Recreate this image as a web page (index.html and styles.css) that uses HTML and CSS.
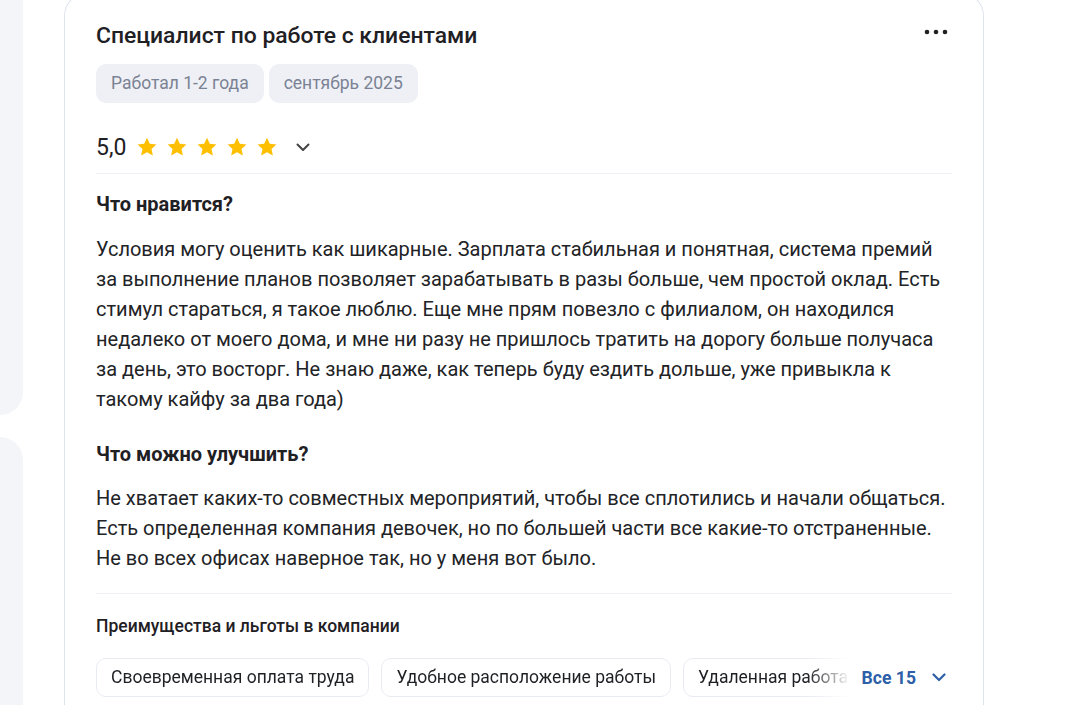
FILE: index.html
```html
<!DOCTYPE html>
<html lang="ru">
<head>
    <meta charset="UTF-8">
    <meta name="viewport" content="width=device-width, initial-scale=1.0">
    <title>Отзыв сотрудника</title>
    <link rel="stylesheet" href="styles.css">
</head>
<body>

    <div class="page">
        <!-- соседние карточки слева, видны только краем -->
        <div class="side">
            <div class="side-card side-card-top"></div>
            <div class="side-card side-card-bottom"></div>
        </div>

        <div class="review">
            <div class="review-head">
                <h2 class="review-title">Специалист по работе с клиентами</h2>
                <button class="menu-btn" type="button" aria-label="Ещё">
                    <svg width="24" height="8" viewBox="0 0 24 8">
                        <circle cx="3" cy="4" r="2.3" fill="#1f2024"/>
                        <circle cx="12" cy="4" r="2.3" fill="#1f2024"/>
                        <circle cx="21" cy="4" r="2.3" fill="#1f2024"/>
                    </svg>
                </button>
            </div>

            <div class="tags">
                <span class="tag">Работал 1-2 года</span>
                <span class="tag">сентябрь 2025</span>
            </div>

            <div class="rating">
                <span class="rating-value">5,0</span>
                <div class="stars" id="stars"></div>
                <svg class="rating-toggle" width="14" height="9" viewBox="0 0 14 9">
                    <path d="M1.5 1.5 L7 7 L12.5 1.5" fill="none" stroke="#444" stroke-width="2" stroke-linecap="round" stroke-linejoin="round"/>
                </svg>
            </div>

            <div class="review-body">
                <div class="section">
                    <h3>Что нравится?</h3>
                    <p>Условия могу оценить как шикарные. Зарплата стабильная и понятная, система премий<br>
                    за выполнение планов позволяет зарабатывать в разы больше, чем простой оклад. Есть<br>
                    стимул стараться, я такое люблю. Еще мне прям повезло с филиалом, он находился<br>
                    недалеко от моего дома, и мне ни разу не пришлось тратить на дорогу больше получаса<br>
                    за день, это восторг. Не знаю даже, как теперь буду ездить дольше, уже привыкла к<br>
                    такому кайфу за два года)</p>
                </div>
                <div class="section">
                    <h3>Что можно улучшить?</h3>
                    <p>Не хватает каких-то совместных мероприятий, чтобы все сплотились и начали общаться.<br>
                    Есть определенная компания девочек, но по большей части все какие-то отстраненные.<br>
                    Не во всех офисах наверное так, но у меня вот было.</p>
                </div>
            </div>

            <div class="benefits">
                <h4>Преимущества и льготы в компании</h4>
                <div class="benefits-row">
                    <div class="chips">
                        <span class="chip">Своевременная оплата труда</span>
                        <span class="chip">Удобное расположение работы</span>
                        <span class="chip">Удаленная работа</span>
                        <span class="chip">ДМС</span>
                    </div>
                    <button class="more-btn" type="button">
                        Все 15
                        <svg width="14" height="9" viewBox="0 0 14 9">
                            <path d="M1.5 1.5 L7 7 L12.5 1.5" fill="none" stroke="#2d5fa8" stroke-width="2.2" stroke-linecap="round" stroke-linejoin="round"/>
                        </svg>
                    </button>
                </div>
            </div>
        </div>
    </div>

    <script>
        // рисуем звёзды рейтинга
        const starsBox = document.getElementById('stars');
        const rating = 5;
        for (let i = 0; i < 5; i++) {
            const color = i < rating ? '#fdbf00' : '#dfe2ea';
            starsBox.innerHTML += `
                <svg width="22" height="22" viewBox="0 0 24 24">
                    <path d="M12 1.8l3.05 6.6 7.2.8-5.35 4.9 1.5 7.1L12 17.6l-6.4 3.6 1.5-7.1L1.75 9.2l7.2-.8z" fill="${color}"/>
                </svg>`;
        }
    </script>

</body>
</html>
```

FILE: styles.css
```css
/* базовые стили */
* {
    box-sizing: border-box;
}
body {
    margin: 0;
    height: 705px;
    overflow: hidden;
    background-color: #ffffff;
    font-family: Roboto, "Noto Sans", Arial, sans-serif;
    color: #1f2024;
}
.page {
    display: flex;
    gap: 41px;
    height: 100%;
}

/* край соседней колонки */
.side {
    width: 23px;
    flex-shrink: 0;
    display: flex;
    flex-direction: column;
    gap: 22px;
}
.side-card {
    background-color: #f4f5f9;
}
.side-card-top {
    height: 415px;
    border-bottom-right-radius: 24px;
}
.side-card-bottom {
    flex: 1;
    border-top-right-radius: 24px;
}

/* карточка отзыва */
.review {
    width: 920px;
    flex-shrink: 0;
    margin-top: -8px;
    padding: 29px 31px 0 31px;
    border: 1px solid #dfe3eb;
    border-bottom: none;
    border-radius: 24px 24px 0 0;
    background-color: #fff;
}
.review-head {
    display: flex;
    justify-content: space-between;
    align-items: flex-start;
}
.review-title {
    margin: 0;
    font-size: 22.9px;
    line-height: 28px;
    font-weight: 500;
}
.menu-btn {
    border: none;
    background: none;
    padding: 0;
    margin: 6px 4px 0 0;
    cursor: pointer;
    display: flex;
}

.tags {
    display: flex;
    gap: 5px;
    margin-top: 14px;
}
.tag {
    background-color: #eef0f6;
    color: #7b8293;
    font-size: 17.5px;
    line-height: 39px;
    padding: 0 15px;
    border-radius: 10px;
}

.rating {
    display: flex;
    align-items: center;
    height: 30px;
    margin-top: 29px;
}
.rating-value {
    font-size: 23px;
    margin-right: 10px;
}
.stars {
    display: flex;
    gap: 8px;
}
.stars svg {
    display: block;
}
.rating-toggle {
    margin-left: 18px;
    margin-top: 1px;
}

.review-body {
    margin-top: 11px;
    border-top: 1px solid #eef0f5;
    border-bottom: 1px solid #eef0f5;
    padding: 18px 0 20px;
}
.section + .section {
    margin-top: 28px;
}
.section h3 {
    margin: 0 0 18px;
    font-size: 20px;
    line-height: 24px;
    font-weight: 700;
}
.section + .section h3 {
    margin-bottom: 17px;
}
.section p {
    margin: 0;
    font-size: 20px;
    line-height: 30px;
    color: #222326;
    white-space: nowrap; /* строки разбиты вручную */
}

/* льготы */
.benefits {
    padding-top: 21px;
}
.benefits h4 {
    margin: 0;
    font-size: 17.5px;
    line-height: 22px;
    font-weight: 500;
}
.benefits-row {
    display: flex;
    align-items: center;
    margin-top: 21px;
}
.chips {
    flex: 1;
    min-width: 0;
    display: flex;
    gap: 12px;
    overflow: hidden;
    -webkit-mask-image: linear-gradient(to right, #000 calc(100% - 42px), transparent);
    mask-image: linear-gradient(to right, #000 calc(100% - 42px), transparent);
}
.chip {
    flex-shrink: 0;
    font-size: 17.5px;
    line-height: 37px;
    padding: 0 14px;
    border: 1px solid #e8ebf2;
    border-radius: 10px;
    color: #1f2024;
    white-space: nowrap;
}
.more-btn {
    display: flex;
    align-items: center;
    gap: 16px;
    margin-left: 12px;
    padding: 0 6px 0 0;
    border: none;
    background: none;
    font-family: inherit;
    font-size: 17.6px;
    font-weight: 700;
    color: #2d5fa8;
    cursor: pointer;
}
```
